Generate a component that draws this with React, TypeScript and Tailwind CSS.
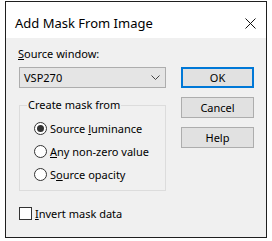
import React from "react";

const font = { fontFamily: '"Noto Sans", "Open Sans", sans-serif' };

function Radio({ checked, children }: { checked?: boolean; children: React.ReactNode }) {
  return (
    <div className="flex items-center h-[23px]">
      <span className="w-[13px] h-[13px] rounded-full border border-[#333] bg-white flex items-center justify-center">
        {checked && <span className="w-[7px] h-[7px] rounded-full bg-[#333]" />}
      </span>
      <span className="ml-[3px]">{children}</span>
    </div>
  );
}

function Btn({ primary, children }: { primary?: boolean; children: React.ReactNode }) {
  return (
    <div
      className={
        "w-[73px] h-[21px] flex items-center justify-center bg-[#e1e1e1] " +
        (primary ? "border-2 border-[#0078d7]" : "border border-[#adadad]")
      }
    >
      {children}
    </div>
  );
}

export default function App() {
  return (
    <div className="w-[272px] h-[241px] bg-white pl-[5px] pt-[1px]" style={font}>
      <div className="w-[262px] h-[237px] border border-[#1f1f1f] flex flex-col text-[11px] text-black leading-none">
        <div className="h-[36px] bg-white flex items-center justify-between pl-[9px] pr-[10px] pt-[6px]">
          <span className="text-[13px]">Add Mask From Image</span>
          <svg width="11" height="11" viewBox="0 0 11 11">
            <path d="M0.5 0.5 L10.5 10.5 M10.5 0.5 L0.5 10.5" stroke="#111" strokeWidth="1" />
          </svg>
        </div>
        <div className="flex-1 bg-[#f0f0f0] flex pl-[13px] pt-[10px]">
          <div className="w-[147px] flex flex-col">
            <span className="h-[12px] leading-[12px] ml-[-1px]">
              <u>S</u>ource window:
            </span>
            <div className="mt-[7px] h-[21px] bg-[#e5e5e5] border border-[#adadad] flex items-center justify-between pl-[4px] pr-[5px]">
              <span>VSP270</span>
              <svg width="9" height="5" viewBox="0 0 9 5">
                <path d="M0.5 0.5 L4.5 4.5 L8.5 0.5" stroke="#444" fill="none" strokeWidth="1" />
              </svg>
            </div>
            <div className="mt-[17px] h-[86px] border border-[#dcdcdc] relative pl-[14px] pt-[11px]">
              <span className="absolute left-[7px] top-[-7px] bg-[#f0f0f0] px-[1px]">Create mask from</span>
              <Radio checked>
                Source <u>l</u>uminance
              </Radio>
              <Radio>
                <u>A</u>ny non-zero value
              </Radio>
              <Radio>
                S<u>o</u>urce opacity
              </Radio>
            </div>
            <div className="mt-[16px] flex items-center">
              <span className="w-[13px] h-[13px] border border-[#333] bg-white" />
              <span className="ml-[3px]">
                <u>I</u>nvert mask data
              </span>
            </div>
          </div>
          <div className="ml-[15px] mt-[19px] flex flex-col gap-[9px]">
            <Btn primary>OK</Btn>
            <Btn>Cancel</Btn>
            <Btn>Help</Btn>
          </div>
        </div>
      </div>
    </div>
  );
}
